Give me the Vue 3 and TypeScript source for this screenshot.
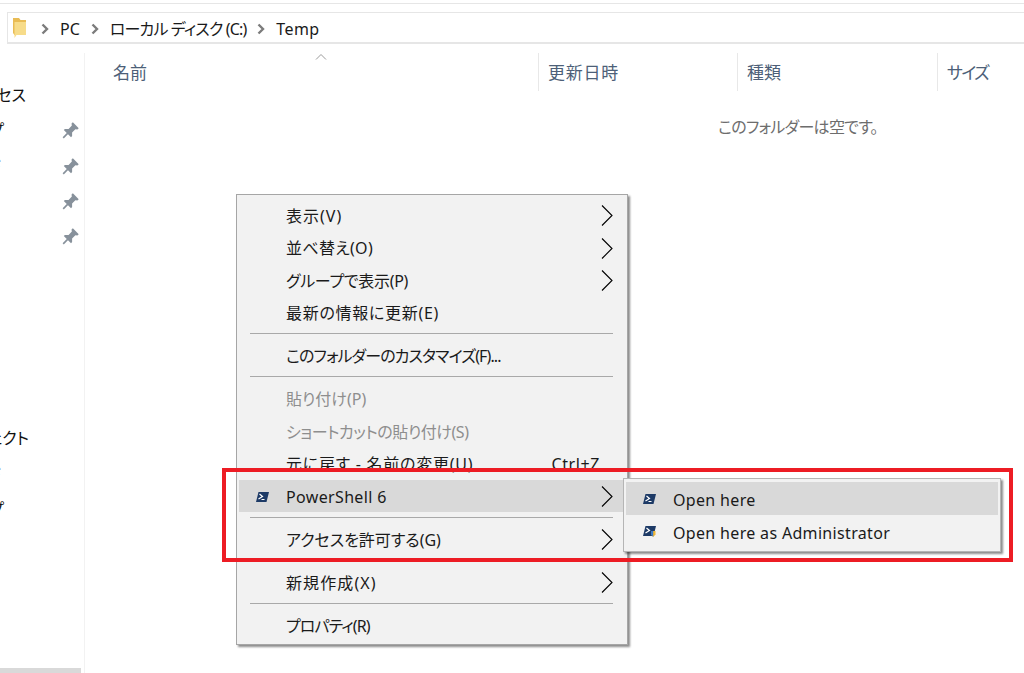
<script setup lang="ts">
interface MenuRow {
  kind: 'item' | 'sep'
  label?: string
  arrow?: boolean
  disabled?: boolean
  shortcut?: string
  active?: boolean
  icon?: boolean
  sp?: number
}

const menuRows: MenuRow[] = [
  { kind: 'item', label: '表示(V)', arrow: true, sp: 1 },
  { kind: 'item', label: '並べ替え(O)', arrow: true, sp: 0.3 },
  { kind: 'item', label: 'グループで表示(P)', arrow: true, sp: -0.3 },
  { kind: 'item', label: '最新の情報に更新(E)', sp: 0.7 },
  { kind: 'sep' },
  { kind: 'item', label: 'このフォルダーのカスタマイズ(F)...', sp: -0.9 },
  { kind: 'sep' },
  { kind: 'item', label: '貼り付け(P)', disabled: true },
  { kind: 'item', label: 'ショートカットの貼り付け(S)', disabled: true, sp: -0.45 },
  { kind: 'item', label: '元に戻す - 名前の変更(U)', shortcut: 'Ctrl+Z', sp: 0.75 },
  { kind: 'item', label: 'PowerShell 6', arrow: true, active: true, icon: true, sp: 0.35 },
  { kind: 'sep' },
  { kind: 'item', label: 'アクセスを許可する(G)', arrow: true },
  { kind: 'sep' },
  { kind: 'item', label: '新規作成(X)', arrow: true, sp: 1.1 },
  { kind: 'sep' },
  { kind: 'item', label: 'プロパティ(R)', sp: -0.9 }
]

const quickRows = [
  { label: 'クイック アクセス', end: 26, pin: false },
  { label: 'デスクトップ', end: 4, pin: true },
  { label: 'ダウンロード', end: 1, pin: true },
  { label: 'ドキュメント', end: 0, pin: true },
  { label: 'ピクチャ', end: -2, pin: true }
]

const pcRows = [
  { label: '3D オブジェクト', end: 29 },
  { label: 'ダウンロード', end: 1 },
  { label: 'デスクトップ', end: 4 },
  { label: 'ドキュメント', end: 0 }
]

const crumbs = [
  { label: 'PC', sp: 0 },
  { label: 'ローカル ディスク (C:)', sp: -0.85 },
  { label: 'Temp', sp: 0.4 }
]

const columns = [
  { label: '名前', sp: 0 },
  { label: '更新日時', sp: 0.75 },
  { label: '種類', sp: 0 },
  { label: 'サイズ', sp: -1.7 }
]
</script>

<template>
  <div class="page">
    <div class="top-line"></div>

    <div class="address">
      <svg class="folder" width="14" height="20" viewBox="0 0 14 20">
        <path d="M0 0h6l1.500 2H13v15H1.500L0 15z" fill="#e9bc55" />
        <path d="M1.500 20V4H13v13H3.500z" fill="#f7dc8a" />
      </svg>
      <template v-for="crumb in crumbs" :key="crumb.label">
        <svg class="crumb-arrow" width="8" height="12" viewBox="0 0 8 12">
          <path d="M1.500 1.500 6 6l-4.500 4.500" fill="none" stroke="#7c7c7c" stroke-width="2.400" />
        </svg>
        <span class="crumb" :style="{ letterSpacing: crumb.sp + 'px' }">{{ crumb.label }}</span>
      </template>
    </div>

    <div class="main">
      <aside class="sidebar">
        <div v-for="row in quickRows" :key="row.label" class="side-row">
          <span class="side-label" :style="{ marginLeft: row.end + 'px' }">{{ row.label }}</span>
          <svg v-if="row.pin" class="pin" width="19" height="19" viewBox="0 0 16 16">
            <g transform="rotate(45 8 8)" fill="#87919b">
              <path d="M4.500 0.500h7v1.600l-1.400 1V7l2.200 2.200V10.500H3.700V9.200L5.900 7V3.100l-1.400-1z" />
              <path d="M7.300 10h1.400v5.500H7.300z" />
            </g>
          </svg>
        </div>
        <div class="side-gap"></div>
        <div v-for="row in pcRows" :key="row.label" class="side-row">
          <span class="side-label" :style="{ marginLeft: row.end + 'px' }">{{ row.label }}</span>
        </div>
        <div class="side-scroll"></div>
      </aside>

      <section class="content">
        <svg class="sort-caret" width="12" height="7" viewBox="0 0 12 7">
          <path d="M1 6.500 6 1.500l5 5" fill="none" stroke="#9a9a9a" stroke-width="1" />
        </svg>
        <div class="col-head">
          <div
            v-for="col in columns"
            :key="col.label"
            class="col"
            :style="{ letterSpacing: col.sp + 'px' }"
          >{{ col.label }}</div>
        </div>
        <p class="empty">このフォルダーは空です。</p>
      </section>
    </div>

    <div class="menu">
      <template v-for="(row, i) in menuRows" :key="i">
        <div v-if="row.kind === 'sep'" class="sep"></div>
        <div
          v-else
          class="item"
          :class="{ active: row.active, disabled: row.disabled }"
        >
          <span class="icon-col">
            <svg v-if="row.icon" width="13" height="10" viewBox="0 0 13 10">
              <path d="M2.500 0H13l-2.500 10H0z" fill="#1d3a66" />
              <path d="M3.500 2 6.500 4.500 2.500 7" fill="none" stroke="#fff" stroke-width="1.200" />
              <path d="M5.500 7.500h3" stroke="#fff" stroke-width="1" />
            </svg>
          </span>
          <span class="label" :style="{ letterSpacing: (row.sp ?? 0) + 'px' }">{{ row.label }}</span>
          <span v-if="row.shortcut" class="shortcut">{{ row.shortcut }}</span>
          <svg v-if="row.arrow" class="chevron" width="12" height="21" viewBox="0 0 12 21">
            <path d="M1 .5 11 10.500 1 20.500" fill="none" stroke="#000" stroke-width="1.100" />
          </svg>
        </div>
      </template>
    </div>

    <div class="submenu">
      <div class="sub-item active">
        <span class="sub-icon">
          <svg width="13" height="10" viewBox="0 0 13 10">
            <path d="M2.500 0H13l-2.500 10H0z" fill="#1d3a66" />
            <path d="M3.500 2 6.500 4.500 2.500 7" fill="none" stroke="#fff" stroke-width="1.200" />
            <path d="M5.500 7.500h3" stroke="#fff" stroke-width="1" />
          </svg>
        </span>
        <span class="sub-label">Open here</span>
      </div>
      <div class="sub-item">
        <span class="sub-icon">
          <svg width="13" height="11" viewBox="0 0 13 11">
            <path d="M2.500 0H13l-2.500 10H0z" fill="#1d3a66" />
            <path d="M3.500 2 6.500 4.500 2.500 7" fill="none" stroke="#fff" stroke-width="1.200" />
            <path d="M8 5h4.500v3.500L10.200 11 8 8.500z" fill="#f2b632" />
            <path d="M10.200 5v6L8 8.500V5z" fill="#3b78c4" />
          </svg>
        </span>
        <span class="sub-label">Open here as Administrator</span>
      </div>
    </div>

    <div class="highlight-box"></div>
  </div>
</template>

<style scoped>
.page {
  position: relative;
  width: 1024px;
  height: 673px;
  overflow: hidden;
  background: #fff;
  display: flex;
  flex-direction: column;
  font-family: "Noto Sans", "Noto Sans CJK JP", sans-serif;
  font-feature-settings: "palt";
  font-size: 16px;
  line-height: 1;
  color: #1a1a1a;
}

.top-line {
  height: 1px;
  margin-top: 3px;
  background: #e6e6e6;
  flex: none;
}

.address {
  flex: none;
  display: flex;
  align-items: center;
  height: 29px;
  box-sizing: content-box;
  margin: 8px 0 0 7px;
  padding-left: 5px;
  border: 1px solid #e6e6e6;
  border-width: 1px 0 2px 1px;
}

.folder {
  flex: none;
  margin-right: 14px;
}

.crumb-arrow {
  flex: none;
  margin-right: 11px;
  position: relative;
  top: 1px;
}

.crumb {
  margin-right: 11px;
  white-space: nowrap;
  padding-top: 2px;
}

.main {
  flex: 1;
  display: flex;
  margin-top: 9px;
  min-height: 0;
}

.sidebar {
  flex: none;
  width: 84px;
  border-right: 1px solid #f2f2f2;
  padding-top: 24px;
  display: flex;
  flex-direction: column;
}

.side-row {
  flex: none;
  height: 35.3px;
  position: relative;
  display: flex;
  align-items: center;
}

.side-label {
  flex: none;
  width: 0;
  display: flex;
  justify-content: flex-end;
  white-space: nowrap;
  color: #111;
}

.pin {
  position: absolute;
  left: 60px;
  top: 10px;
}

.side-gap {
  flex: none;
  height: 167px;
}

.side-scroll {
  margin-top: auto;
  width: 81px;
  height: 5px;
  background: #d9d9d9;
  flex: none;
}

.content {
  flex: 1;
  position: relative;
  min-width: 0;
}

.sort-caret {
  position: absolute;
  left: 230px;
  top: 0;
}

.col-head {
  display: grid;
  grid-template-columns: 453px 199px 200px 1fr;
  height: 38px;
  color: #4d5f78;
  font-size: 17px;
}

.col {
  display: flex;
  align-items: center;
  padding-left: 9px;
  border-left: 1px solid #e8e8e8;
}

.col:first-child {
  padding-left: 28px;
  border-left: 0;
}

.empty {
  margin: 28px 0 0 633px;
  color: #6d6d6d;
  white-space: nowrap;
  letter-spacing: -0.7px;
}

.menu {
  position: absolute;
  left: 236px;
  top: 194px;
  width: 392px;
  height: 451px;
  box-sizing: border-box;
  padding: 3.5px 2px 3px;
  background: #f2f2f2;
  border: 1px solid #a6a6a6;
  box-shadow: 2px 2px 2px rgba(0, 0, 0, 0.45);
}

.item {
  display: flex;
  align-items: center;
  height: 32.5px;
  box-sizing: border-box;
  padding: 2px 12px 0 0;
  white-space: nowrap;
}

.item.active {
  background: #d9d9d9;
}

.item.disabled {
  color: #8e8e8e;
}

.icon-col {
  flex: none;
  width: 47px;
  padding-left: 17px;
  box-sizing: border-box;
  display: flex;
  align-items: center;
}

.label {
  flex: 1;
}

.shortcut {
  margin-right: 13px;
  letter-spacing: 0.6px;
}

.chevron {
  flex: none;
}

.sep {
  height: 1px;
  margin: 4.75px 12px 4.75px 11px;
  background: #a9a9a9;
}

.submenu {
  position: absolute;
  left: 623px;
  top: 478px;
  width: 378px;
  height: 74px;
  box-sizing: border-box;
  padding: 3px 2px;
  background: #f2f2f2;
  border: 1px solid #b5b5b5;
  box-shadow: 2px 2px 2px rgba(0, 0, 0, 0.45);
}

.sub-item {
  display: flex;
  align-items: center;
  height: 33px;
  white-space: nowrap;
}

.sub-item.active {
  background: #d9d9d9;
}

.sub-icon {
  flex: none;
  width: 47px;
  padding-left: 17px;
  box-sizing: border-box;
  display: flex;
  align-items: center;
}

.sub-label {
  letter-spacing: 0.33px;
  padding-top: 2px;
}

.highlight-box {
  position: absolute;
  left: 222px;
  top: 468px;
  width: 791px;
  height: 94px;
  box-sizing: border-box;
  border: 4px solid #ed1c24;
}
</style>

<style>
body {
  margin: 0;
  background: #fff;
}
</style>
